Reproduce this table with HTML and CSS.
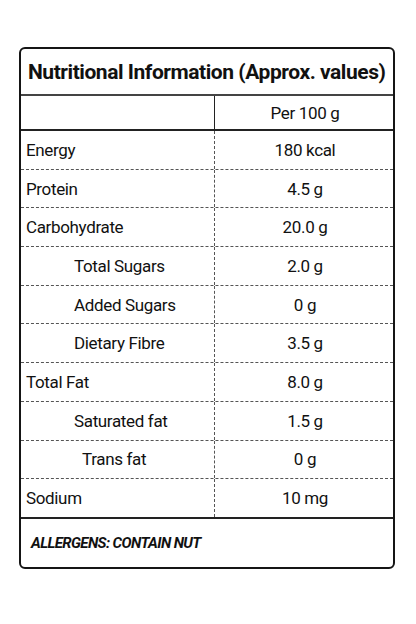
FILE: index.html
```html
<!DOCTYPE html>
<html lang="en">
<head>
  <meta charset="UTF-8" />
  <meta name="viewport" content="width=device-width, initial-scale=1.0" />
  <title>Nutritional Information</title>
  <link rel="stylesheet" href="styles.css">
</head>
<body>

  <div class="card">
    <div class="card-title">Nutritional Information (Approx. values)</div>

    <div class="row row-head">
      <div class="cell name"></div>
      <div class="cell value">Per 100 g</div>
    </div>

    <div class="row">
      <div class="cell name">Energy</div>
      <div class="cell value">180 kcal</div>
    </div>
    <div class="row">
      <div class="cell name">Protein</div>
      <div class="cell value">4.5 g</div>
    </div>
    <div class="row">
      <div class="cell name">Carbohydrate</div>
      <div class="cell value">20.0 g</div>
    </div>
    <div class="row">
      <div class="cell name sub">Total Sugars</div>
      <div class="cell value">2.0 g</div>
    </div>
    <div class="row">
      <div class="cell name sub">Added Sugars</div>
      <div class="cell value">0 g</div>
    </div>
    <div class="row">
      <div class="cell name sub">Dietary Fibre</div>
      <div class="cell value">3.5 g</div>
    </div>
    <div class="row">
      <div class="cell name">Total Fat</div>
      <div class="cell value">8.0 g</div>
    </div>
    <div class="row">
      <div class="cell name sub">Saturated fat</div>
      <div class="cell value">1.5 g</div>
    </div>
    <div class="row">
      <div class="cell name sub deep">Trans fat</div>
      <div class="cell value">0 g</div>
    </div>
    <div class="row row-last">
      <div class="cell name">Sodium</div>
      <div class="cell value">10 mg</div>
    </div>

    <div class="allergens">ALLERGENS: CONTAIN NUT</div>
  </div>

</body>
</html>
```

FILE: styles.css
```css
* {
  box-sizing: border-box;
}

html, body {
  margin: 0;
  padding: 0;
  background-color: #ffffff;
  font-family: Roboto, "Liberation Sans", sans-serif;
  color: #111;
}

.card {
  width: 376px;
  margin: 47px 0 0 19px;
  border: 2px solid #151515;
  border-radius: 6px;
  overflow: hidden;
}

.card-title {
  height: 47px;
  padding-left: 7px;
  display: flex;
  align-items: center;
  font-size: 21px;
  font-weight: bold;
  letter-spacing: -0.45px;
  border-bottom: 2px solid #444;
}

.row {
  display: grid;
  grid-template-columns: 194px 1fr;
  height: 38.7px;
  border-bottom: 1px dashed #555;
  font-size: 17px;
  letter-spacing: -0.35px;
}

.cell {
  display: flex;
  align-items: center;
}

.name {
  padding-left: 5px;
  border-right: 1px dashed #555;
}

.name.sub {
  padding-left: 53px;
}

.name.deep {
  padding-left: 61px;
}

.value {
  justify-content: center;
  padding-left: 2px;
}

.row-head {
  height: 35px;
  border-bottom: 2px solid #222;
}

.row-head .name {
  border-right: 1px solid #222;
}

.row-last {
  height: 40px;
  border-bottom: 2px solid #222;
}

.allergens {
  height: 48px;
  padding-left: 10px;
  display: flex;
  align-items: center;
  font-size: 15px;
  font-weight: bold;
  font-style: italic;
  letter-spacing: -0.6px;
}
```
